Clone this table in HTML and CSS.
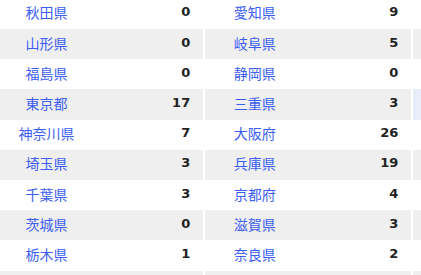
FILE: index.html
```html
<!DOCTYPE html>
<html lang="ja">
<head>
<meta charset="utf-8">
<title>都道府県別</title>
<link rel="stylesheet" href="styles.css">
</head>
<body>
<div class="board">
  <table class="pref">
    <tbody>
      <tr><td class="name"><a href="#">秋田県</a></td><td class="num">0</td></tr>
      <tr class="alt"><td class="name"><a href="#">山形県</a></td><td class="num">0</td></tr>
      <tr><td class="name"><a href="#">福島県</a></td><td class="num">0</td></tr>
      <tr class="alt"><td class="name"><a href="#">東京都</a></td><td class="num">17</td></tr>
      <tr><td class="name"><a href="#">神奈川県</a></td><td class="num">7</td></tr>
      <tr class="alt"><td class="name"><a href="#">埼玉県</a></td><td class="num">3</td></tr>
      <tr><td class="name"><a href="#">千葉県</a></td><td class="num">3</td></tr>
      <tr class="alt"><td class="name"><a href="#">茨城県</a></td><td class="num">0</td></tr>
      <tr><td class="name"><a href="#">栃木県</a></td><td class="num">1</td></tr>
      <tr class="alt"><td class="name"></td><td class="num"></td></tr>
    </tbody>
  </table>
  <table class="pref">
    <tbody>
      <tr><td class="name"><a href="#">愛知県</a></td><td class="num">9</td></tr>
      <tr class="alt"><td class="name"><a href="#">岐阜県</a></td><td class="num">5</td></tr>
      <tr><td class="name"><a href="#">静岡県</a></td><td class="num">0</td></tr>
      <tr class="alt"><td class="name"><a href="#">三重県</a></td><td class="num">3</td></tr>
      <tr><td class="name"><a href="#">大阪府</a></td><td class="num">26</td></tr>
      <tr class="alt"><td class="name"><a href="#">兵庫県</a></td><td class="num">19</td></tr>
      <tr><td class="name"><a href="#">京都府</a></td><td class="num">4</td></tr>
      <tr class="alt"><td class="name"><a href="#">滋賀県</a></td><td class="num">3</td></tr>
      <tr><td class="name"><a href="#">奈良県</a></td><td class="num">2</td></tr>
      <tr class="alt"><td class="name"></td><td class="num"></td></tr>
    </tbody>
  </table>
  <table class="pref">
    <tbody>
      <tr><td class="name"></td><td class="num"></td></tr>
      <tr class="alt"><td class="name"></td><td class="num"></td></tr>
      <tr><td class="name"></td><td class="num"></td></tr>
      <tr class="hl"><td class="name"></td><td class="num"></td></tr>
      <tr><td class="name"></td><td class="num"></td></tr>
      <tr class="alt"><td class="name"></td><td class="num"></td></tr>
      <tr><td class="name"></td><td class="num"></td></tr>
      <tr class="alt"><td class="name"></td><td class="num"></td></tr>
      <tr><td class="name"></td><td class="num"></td></tr>
      <tr class="alt"><td class="name"></td><td class="num"></td></tr>
    </tbody>
  </table>
</div>
</body>
</html>
```
FILE: styles.css
```css
html, body {
  margin: 0;
  padding: 0;
  background: #ffffff;
}

body {
  overflow: hidden;
  font-family: "Noto Sans CJK JP", "DejaVu Sans", sans-serif;
}

.board {
  display: flex;
  gap: 2.5px;
  margin-left: -3px;
  margin-top: -1.2px;
  width: max-content;
}

.pref {
  width: 205.7px;
  border-collapse: collapse;
  table-layout: fixed;
}

.pref tr {
  height: 30.2px;
  background: #ffffff;
}

.pref tr.alt {
  background: #efefef;
}

.pref tr.hl {
  background: #e8edfa;
}

.pref td {
  padding: 0 0 3px 0;
  vertical-align: middle;
}

.name {
  width: 99px;
  text-align: center;
  font-size: 14px;
  line-height: 18px;
}

.name a {
  color: #3c5ef2;
  text-decoration: none;
}

.num {
  text-align: right;
  padding-right: 12.5px !important;
  font-family: "DejaVu Sans", sans-serif;
  font-weight: bold;
  font-size: 13px;
  line-height: 18px;
  color: #222222;
}
```
